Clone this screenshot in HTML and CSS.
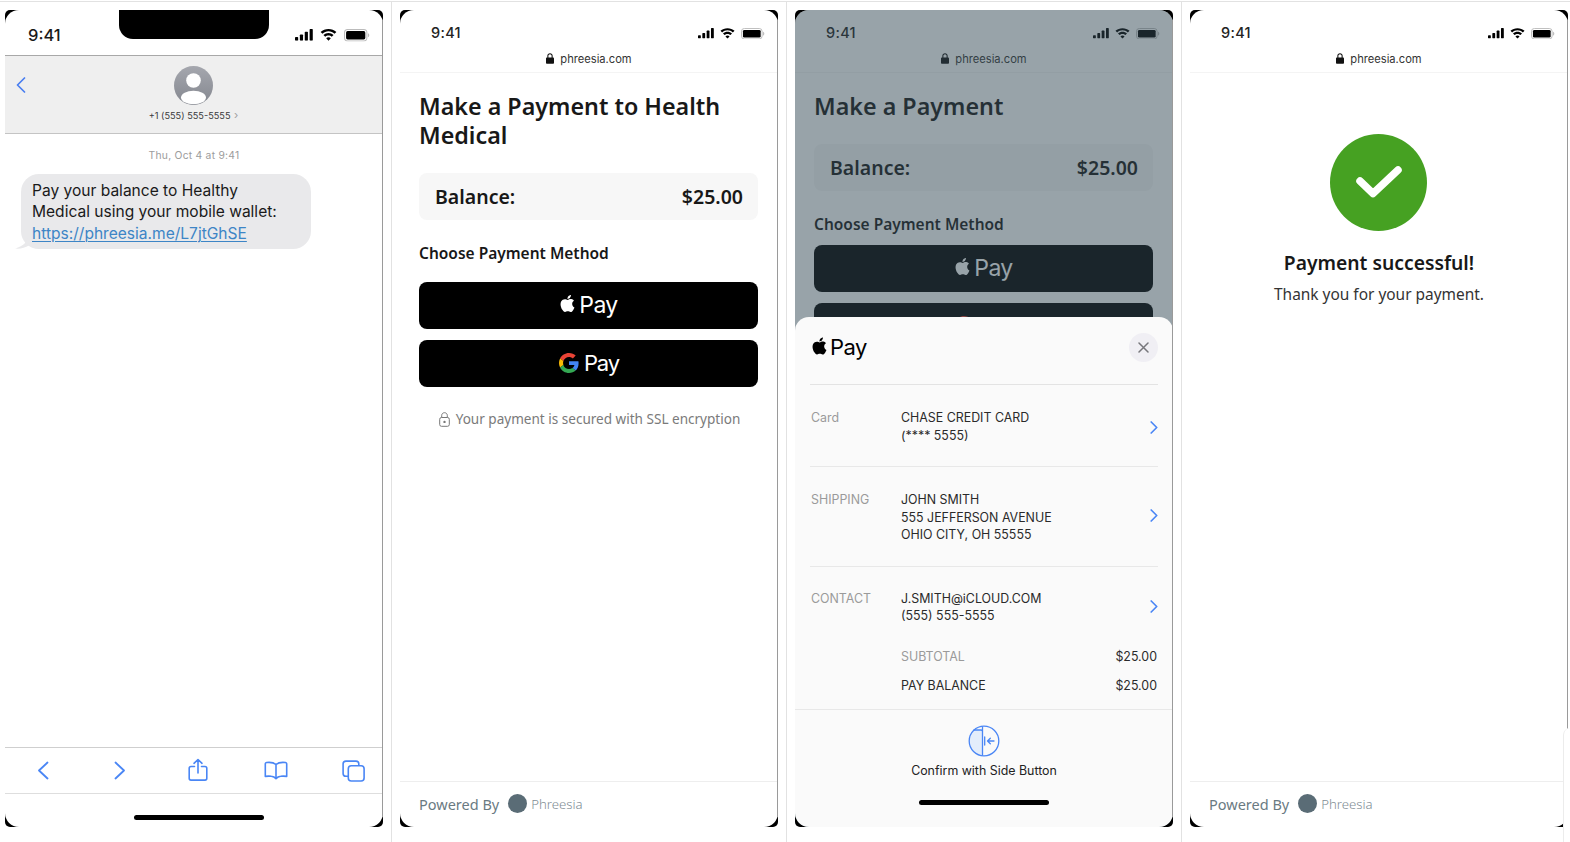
FILE: index.html
```html
<!DOCTYPE html>
<html lang="en">
<head>
<meta charset="utf-8">
<title>Phreesia mobile wallet payment flow</title>
<link rel="stylesheet" href="styles.css">
</head>
<body>
<svg class="defs" aria-hidden="true">
  <symbol id="signal" viewBox="0 0 17 11"><rect x="0" y="7.5" width="3" height="3.5" rx=".7"/><rect x="4.6" y="5.2" width="3" height="5.8" rx=".7"/><rect x="9.2" y="2.6" width="3" height="8.4" rx=".7"/><rect x="13.8" y="0" width="3" height="11" rx=".7"/></symbol>
  <symbol id="wifi" viewBox="0 0 16 11.400"><path d="M8 2.200c2.200 0 4.200.9 5.700 2.300l1.800-1.700C13.500.9 10.900 0 8 0S2.500.9.500 2.800l1.800 1.700C3.800 3.100 5.800 2.200 8 2.200zM8 6.100c1.200 0 2.300.5 3.100 1.200l1.700-1.700C11.500 4.400 9.800 3.700 8 3.700s-3.500.7-4.800 1.900l1.700 1.700C5.700 6.600 6.800 6.100 8 6.100zM8 7.900c-.9 0-1.600.3-2.200.9l2.200 2.300 2.200-2.300c-.6-.6-1.300-.9-2.200-.9z"/></symbol>
  <symbol id="battery" viewBox="0 0 25 12"><rect x=".5" y=".5" width="21.500" height="11" rx="3" fill="none" stroke="#bbb"/><rect x="2" y="2" width="18.500" height="8" rx="1.500"/><path d="M23 4v4c.8-.3 1.300-1.100 1.300-2S23.800 4.300 23 4z" fill="#bbb"/></symbol>
  <symbol id="padlock" viewBox="0 0 9 12"><path d="M4.500 0C2.800 0 1.500 1.300 1.500 3v1.800H1.200C.5 4.800 0 5.300 0 6v4.800c0 .7.5 1.200 1.200 1.200h6.600c.7 0 1.200-.5 1.200-1.200V6c0-.7-.5-1.200-1.200-1.200h-.3V3c0-1.700-1.300-3-3-3zm0 1.200c1 0 1.800.8 1.800 1.800v1.800H2.700V3c0-1 .8-1.800 1.800-1.800z"/></symbol>
  <symbol id="apple" viewBox="0 0 24 24"><path d="M12.152 6.896c-.948 0-2.415-1.078-3.960-1.040-2.040.027-3.910 1.183-4.961 3.014-2.117 3.675-.546 9.103 1.519 12.090 1.013 1.454 2.208 3.090 3.792 3.039 1.520-.065 2.090-.987 3.935-.987 1.831 0 2.350.987 3.960.948 1.637-.026 2.676-1.480 3.676-2.948 1.156-1.688 1.636-3.325 1.662-3.415-.039-.013-3.182-1.221-3.220-4.857-.026-3.040 2.480-4.494 2.597-4.559-1.429-2.090-3.623-2.324-4.390-2.376-2-.156-3.675 1.090-4.610 1.090zM15.530 3.830c.843-1.012 1.400-2.427 1.245-3.830-1.207.052-2.662.805-3.532 1.818-.78.896-1.454 2.338-1.273 3.714 1.338.104 2.715-.688 3.559-1.701"/></symbol>
  <symbol id="google" viewBox="0 0 48 48"><path fill="#EA4335" d="M24 9.500c3.540 0 6.710 1.220 9.210 3.600l6.850-6.850C35.900 2.380 30.470 0 24 0 14.620 0 6.510 5.380 2.560 13.220l7.980 6.190C12.430 13.720 17.740 9.500 24 9.500z"/><path fill="#4285F4" d="M46.980 24.550c0-1.570-.15-3.090-.38-4.550H24v9.020h12.940c-.58 2.960-2.260 5.480-4.780 7.180l7.730 6c4.510-4.180 7.090-10.360 7.090-17.650z"/><path fill="#FBBC05" d="M10.530 28.590c-.48-1.450-.76-2.990-.76-4.590s.27-3.140.76-4.590l-7.980-6.190C.92 16.460 0 20.120 0 24c0 3.880.92 7.540 2.560 10.780l7.970-6.190z"/><path fill="#34A853" d="M24 48c6.480 0 11.930-2.130 15.890-5.810l-7.730-6c-2.150 1.450-4.920 2.300-8.160 2.300-6.260 0-11.570-4.220-13.470-9.910l-7.980 6.190C6.510 42.620 14.620 48 24 48z"/></symbol>
  <symbol id="chev" viewBox="0 0 8 13"><path d="M1.200 1l5.500 5.500-5.500 5.500" fill="none" stroke="#4a86f5" stroke-width="1.700" stroke-linecap="round" stroke-linejoin="round"/></symbol>
</svg>

<main class="board">
  <!-- 1: Messages -->
  <section class="cell cell-first">
    <div class="phone">
      <div class="screen">
        <div class="sms-status">
          <span class="sms-time">9:41</span>
          <div class="notch"></div>
          <div class="status-icons status-icons-lg">
            <svg class="i-signal"><use href="#signal"/></svg>
            <svg class="i-wifi"><use href="#wifi"/></svg>
            <svg class="i-battery"><use href="#battery"/></svg>
          </div>
        </div>
        <header class="sms-head">
          <svg class="sms-back" viewBox="0 0 10 16"><path d="M8.500 1L1.500 8l7 7" fill="none" stroke="#4a7ff0" stroke-width="1.700" stroke-linecap="round" stroke-linejoin="round"/></svg>
          <svg class="avatar" viewBox="0 0 39 39">
            <defs>
              <linearGradient id="avg" x1="0" y1="0" x2="0" y2="1"><stop offset="0" stop-color="#a5a7ae"/><stop offset="1" stop-color="#84878f"/></linearGradient>
              <clipPath id="avc"><circle cx="19.500" cy="19.500" r="19.500"/></clipPath>
            </defs>
            <circle cx="19.500" cy="19.500" r="19.500" fill="url(#avg)"/>
            <circle cx="19.500" cy="14.500" r="7.300" fill="#fff"/>
            <ellipse cx="19.500" cy="31.500" rx="12.500" ry="6.800" fill="#fff" clip-path="url(#avc)"/>
          </svg>
          <div class="sms-name">+1 (555) 555-5555 <span class="sms-name-arrow">›</span></div>
        </header>
        <div class="sms-body">
          <div class="sms-stamp">Thu, Oct 4 at 9:41</div>
          <div class="bubble">
            Pay your balance to Healthy<br>Medical using your mobile wallet:<br>
            <a class="bubble-link">https://phreesia.me/L7jtGhSE</a>
            <svg class="bubble-tail" viewBox="0 0 14 12"><path d="M12 0c0 5-3 9-12 11.500 5 .5 10-.5 14-3z" fill="#e9e9eb"/></svg>
          </div>
        </div>
        <nav class="toolbar">
          <svg class="tool tool-chev" viewBox="0 0 12 19"><path d="M10.500 1.500L2 9.500l8.500 8" fill="none" stroke="#4a86f5" stroke-width="1.800" stroke-linecap="round" stroke-linejoin="round"/></svg>
          <svg class="tool tool-chev" viewBox="0 0 12 19"><path d="M1.500 1.500L10 9.500l-8.500 8" fill="none" stroke="#4a86f5" stroke-width="1.800" stroke-linecap="round" stroke-linejoin="round"/></svg>
          <svg class="tool tool-share" viewBox="0 0 20 24" fill="none" stroke="#4a86f5" stroke-width="1.600" stroke-linecap="round" stroke-linejoin="round"><path d="M6.500 8.500H3c-1 0-1.800.8-1.800 1.800v10c0 1 .8 1.800 1.800 1.800h14c1 0 1.800-.8 1.800-1.800v-10c0-1-.8-1.800-1.800-1.800h-3.500"/><path d="M10 15V1.500M6 5.300l4-3.800 4 3.800"/></svg>
          <svg class="tool tool-book" viewBox="0 0 24 19" fill="none" stroke="#4a86f5" stroke-width="1.600" stroke-linecap="round" stroke-linejoin="round"><path d="M12 3.500C10 1.800 6.500 1 2.500 1.500c-.7.1-1.200.7-1.200 1.400v12.500c2-.3 4-.4 6-.1 2 .2 3.700 1.200 4.700 2.400 1-1.200 2.700-2.200 4.700-2.400 2-.3 4-.2 6 .1V2.900c0-.7-.5-1.300-1.200-1.400C17.500 1 14 1.800 12 3.500zM12 3.500v14"/></svg>
          <svg class="tool tool-tabs" viewBox="0 0 23 22" fill="none" stroke="#4a86f5" stroke-width="1.600" stroke-linejoin="round"><rect x="6.300" y="5.800" width="15.800" height="15.200" rx="3"/><path d="M6.300 16.300H4c-1.600 0-2.900-1.300-2.900-2.900V4C1.100 2.400 2.400 1.100 4 1.100h10c1.600 0 2.800 1.300 2.800 2.900v1.800"/></svg>
        </nav>
        <div class="home-row home-row-sms"><div class="home-bar"></div></div>
      </div>
    </div>
  </section>

  <!-- 2: Choose method -->
  <section class="cell">
    <div class="phone">
      <div class="screen">
        <div class="web-status">
          <span class="web-time">9:41</span>
          <div class="status-icons">
            <svg class="i-signal"><use href="#signal"/></svg>
            <svg class="i-wifi"><use href="#wifi"/></svg>
            <svg class="i-battery"><use href="#battery"/></svg>
          </div>
        </div>
        <div class="urlbar"><svg class="i-lock"><use href="#padlock"/></svg><span>phreesia.com</span></div>
        <div class="page">
          <h1 class="title title-two">Make a Payment to Health Medical</h1>
          <div class="balance"><span>Balance:</span><span>$25.00</span></div>
          <h2 class="choose">Choose Payment Method</h2>
          <button class="pay-btn"><svg class="pay-apple"><use href="#apple"/></svg><span>Pay</span></button>
          <button class="pay-btn pay-btn-g"><svg class="pay-g"><use href="#google"/></svg><span>Pay</span></button>
          <p class="secure">
            <svg class="secure-lock" viewBox="0 0 11 15" fill="none" stroke="#777" stroke-width="1"><rect x=".7" y="5.500" width="9.600" height="8.800" rx="1.800"/><path d="M2.700 5.500V3.400C2.700 1.800 4 .7 5.500.7s2.800 1.100 2.800 2.700v2.100"/><circle cx="5.500" cy="9.900" r="1.200" fill="#777" stroke="none"/></svg>
            Your payment is secured with SSL encryption
          </p>
        </div>
        <footer class="powered"><span>Powered By</span><i class="powered-dot"></i><span class="powered-name">Phreesia</span></footer>
      </div>
    </div>
  </section>

  <!-- 3: Apple Pay sheet -->
  <section class="cell">
    <div class="phone">
      <div class="screen">
        <div class="web-status">
          <span class="web-time">9:41</span>
          <div class="status-icons">
            <svg class="i-signal"><use href="#signal"/></svg>
            <svg class="i-wifi"><use href="#wifi"/></svg>
            <svg class="i-battery"><use href="#battery"/></svg>
          </div>
        </div>
        <div class="urlbar"><svg class="i-lock"><use href="#padlock"/></svg><span>phreesia.com</span></div>
        <div class="page">
          <h1 class="title">Make a Payment</h1>
          <div class="balance"><span>Balance:</span><span>$25.00</span></div>
          <h2 class="choose choose-tight">Choose Payment Method</h2>
          <button class="pay-btn"><svg class="pay-apple"><use href="#apple"/></svg><span>Pay</span></button>
          <button class="pay-btn pay-btn-g"><svg class="pay-g"><use href="#google"/></svg><span>Pay</span></button>
        </div>
        <div class="scrim"></div>
        <div class="sheet">
          <div class="sheet-head">
            <div class="sheet-logo"><svg class="sheet-apple"><use href="#apple"/></svg><span>Pay</span></div>
            <div class="sheet-close"><svg viewBox="0 0 11 11"><path d="M1 1l9 9M10 1l-9 9" stroke="#77777c" stroke-width="1.500" stroke-linecap="round"/></svg></div>
          </div>
          <div class="sheet-row">
            <div class="sheet-label">Card</div>
            <div class="sheet-value">CHASE CREDIT CARD<br>(**** 5555)</div>
            <svg class="sheet-chev"><use href="#chev"/></svg>
          </div>
          <div class="sheet-row">
            <div class="sheet-label">SHIPPING</div>
            <div class="sheet-value">JOHN SMITH<br>555 JEFFERSON AVENUE<br>OHIO CITY, OH 55555</div>
            <svg class="sheet-chev sheet-chev-up2"><use href="#chev"/></svg>
          </div>
          <div class="sheet-row sheet-row-last">
            <div class="sheet-label">CONTACT</div>
            <div class="sheet-value">J.SMITH@iCLOUD.COM<br>(555) 555-5555</div>
            <svg class="sheet-chev sheet-chev-up1"><use href="#chev"/></svg>
          </div>
          <div class="totals">
            <div class="total-line total-sub"><span>SUBTOTAL</span><b>$25.00</b></div>
            <div class="total-line"><span>PAY BALANCE</span><b>$25.00</b></div>
          </div>
          <div class="confirm">
            <svg class="confirm-icon" viewBox="0 0 32 32" fill="none">
              <path d="M14.500 1.700C7.200 2.400 1.500 8.500 1.500 16s5.700 13.600 13 14.300V6.500c0-.9-.6-1.500-1.500-1.500H6z" fill="#e3edfb"/>
              <circle cx="16" cy="16" r="14.800" stroke="#4a86f5" stroke-width="1.300"/>
              <path d="M14.500 2v28M6 5h7c.9 0 1.500.6 1.500 1.500M16.700 12v8M26 16h-6.500M22.300 13.200L19.500 16l2.800 2.800" stroke="#4a86f5" stroke-width="1.300" stroke-linecap="round" stroke-linejoin="round"/>
            </svg>
            <div class="confirm-text">Confirm with Side Button</div>
          </div>
          <div class="home-row home-row-sheet"><div class="home-bar"></div></div>
        </div>
      </div>
    </div>
  </section>

  <!-- 4: Success -->
  <section class="cell cell-last">
    <div class="phone">
      <div class="screen">
        <div class="web-status">
          <span class="web-time">9:41</span>
          <div class="status-icons">
            <svg class="i-signal"><use href="#signal"/></svg>
            <svg class="i-wifi"><use href="#wifi"/></svg>
            <svg class="i-battery"><use href="#battery"/></svg>
          </div>
        </div>
        <div class="urlbar"><svg class="i-lock"><use href="#padlock"/></svg><span>phreesia.com</span></div>
        <div class="page success">
          <svg class="success-icon" viewBox="0 0 97 97"><circle cx="48.500" cy="48.500" r="48.500" fill="#46a122"/><path d="M30 47l13 12.500L68 36" fill="none" stroke="#fff" stroke-width="7.500" stroke-linecap="round" stroke-linejoin="round"/></svg>
          <h1 class="success-title">Payment successful!</h1>
          <p class="success-text">Thank you for your payment.</p>
        </div>
        <footer class="powered"><span>Powered By</span><i class="powered-dot"></i><span class="powered-name">Phreesia</span></footer>
      </div>
    </div>
    <div class="edge-patch"></div>
  </section>
</main>
</body>
</html>
```

FILE: styles.css
```css
* { box-sizing: border-box; }
html, body { margin: 0; padding: 0; background: #fff; }
body { width: 1570px; height: 842px; overflow: hidden; padding-top: 1px; font-family: "Inter", "Liberation Sans", sans-serif; color: #1c1c1e; }
.defs { position: absolute; width: 0; height: 0; }
svg { display: block; }

.board { display: grid; grid-template-columns: 391px 395px 395px 389px; height: 841px; border-top: 1px solid #e2e2e2; }
.cell { position: relative; border-left: 1px solid #e2e2e2; padding: 8px 0 0 8px; }
.cell-first { border-left: 0; padding-left: 5px; }

.phone { width: 378px; height: 817px; background: #000; border-radius: 5px; display: flex; position: relative; }
.phone::after { content: ""; position: absolute; top: 10px; bottom: 10px; right: 0; width: 1px; background: #9a9a9a; }
.screen { flex: 1; min-width: 0; background: #fff; border-radius: 14px; overflow: hidden; display: flex; flex-direction: column; position: relative; }

/* status */
.status-icons { display: flex; align-items: center; gap: 6px; }
.i-signal { width: 16px; height: 10.500px; fill: #000; }
.i-wifi { width: 15px; height: 11px; fill: #000; }
.i-battery { width: 24px; height: 11.500px; fill: #000; }
.status-icons-lg { gap: 7px; }
.status-icons-lg .i-signal { width: 18px; height: 11.700px; }
.status-icons-lg .i-wifi { width: 17px; height: 12px; }
.status-icons-lg .i-battery { width: 26px; height: 12.500px; }

/* messages */
.sms-status { height: 46px; flex: none; display: flex; align-items: flex-start; padding: 0 13px 0 23px; border-bottom: 1px solid #a8a8a8; position: relative; }
.sms-time { font-size: 16.500px; font-weight: 500; line-height: 20px; margin-top: 15px; color: #1a1a1a; }
.sms-status .status-icons { margin-left: auto; margin-top: 19px; }
.notch { position: absolute; left: 114px; top: 0; width: 150px; height: 29px; background: #000; border-radius: 0 0 14px 14px; }
.sms-head { height: 78px; flex: none; background: #efefef; border-bottom: 1px solid #c4c4c4; display: flex; flex-direction: column; align-items: center; padding: 10px 1px 0 0; position: relative; }
.sms-back { position: absolute; left: 11px; top: 21px; width: 10px; height: 16px; }
.avatar { width: 39px; height: 39px; flex: none; }
.sms-name { font-size: 9.200px; line-height: 12px; margin-top: 4px; color: #3a3a3c; }
.sms-name-arrow { color: #a0a0a0; font-size: 11px; margin-left: 1px; }
.sms-body { flex: 1; padding: 0 16px; }
.sms-stamp { font-size: 10.300px; line-height: 14px; color: #9c9c9c; text-align: center; margin-top: 14px; letter-spacing: .25px; }
.bubble { width: 290px; height: 75px; margin-top: 12px; padding: 6px 11px; background: #e9e9eb; border-radius: 18px; font-size: 15.550px; line-height: 21.300px; color: #1a1a1a; position: relative; }
.bubble-link { color: #3d85c6; text-decoration: underline; text-underline-offset: 2px; text-decoration-thickness: 1px; }
.bubble-tail { position: absolute; left: -6px; bottom: 0; width: 14px; height: 12px; }
.toolbar { height: 47px; flex: none; border-top: 1px solid #cfcfcf; border-bottom: 1px solid #dedede; display: flex; align-items: center; padding-left: 32px; }
.tool { flex: none; }
.tool-chev { width: 12px; height: 19px; }
.tool-chev + .tool-chev { margin-left: 65px; }
.tool-share { width: 20px; height: 24px; margin-left: 62px; margin-top: -2px; }
.tool-book { width: 24px; height: 19px; margin-left: 56px; }
.tool-tabs { width: 23px; height: 22px; margin-left: 54px; }
.home-row { flex: none; height: 33px; display: flex; justify-content: center; padding-top: 21px; }
.home-row-sms { padding-left: 9px; }
.home-bar { width: 130px; height: 5px; background: #000; border-radius: 3px; }

/* web */
.web-status { flex: none; height: 37px; display: flex; align-items: flex-end; padding: 0 13px 0 31px; justify-content: space-between; }
.web-time { font-size: 14.500px; font-weight: 500; line-height: 18px; margin-bottom: 5px; color: #222; letter-spacing: .3px; }
.web-status .status-icons { margin-bottom: 8px; }
.urlbar { flex: none; height: 26px; display: flex; align-items: center; justify-content: center; gap: 6px; border-bottom: 1px solid #f4f4f4; font-size: 11.150px; color: #333; padding-bottom: 2px; }
.i-lock { width: 8px; height: 11px; fill: #111; }
.page { flex: 1; min-height: 0; padding: 19px 20px 0 19px; font-family: "Noto Sans", "Open Sans", sans-serif; display: flex; flex-direction: column; }
.title { margin: 0; font-size: 23.300px; line-height: 29px; font-weight: 600; color: #181818; }
.title-two { width: 320px; }
.balance { flex: none; height: 47px; margin-top: 23px; padding: 0 15px 0 16px; border-radius: 8px; background: #f7f7f7; display: flex; align-items: center; justify-content: space-between; font-size: 19.500px; font-weight: 600; color: #181818; }
.choose { margin: 21px 0 17px; font-size: 15.500px; line-height: 24px; font-weight: 600; color: #181818; }
.choose-tight { margin-bottom: 9px; }
.pay-btn { flex: none; width: 100%; height: 47px; border: 0; border-radius: 8px; background: #000; margin: 0 0 11px; display: flex; align-items: center; justify-content: center; color: #fff; font-family: "Inter", "Liberation Sans", sans-serif; font-size: 23px; line-height: 28px; letter-spacing: -.6px; padding: 0 0 2px; }
.pay-btn-g { font-size: 22px; letter-spacing: -1.100px; padding-left: 1px; }
.pay-apple { width: 17px; height: 19px; fill: #fff; margin-right: 3px; margin-top: -3px; }
.pay-g { width: 20px; height: 20px; margin-right: 5px; margin-top: 1px; }
.secure { margin: 11px 0 0; padding-left: 2px; display: flex; align-items: center; justify-content: center; gap: 6px; font-size: 13.550px; line-height: 20px; color: #7a7a7a; }
.secure-lock { width: 11px; height: 15px; }
.powered { flex: none; height: 46px; border-top: 1px solid #eeeeee; display: flex; align-items: center; padding: 0 19px 2px; font-family: "Noto Sans", "Open Sans", sans-serif; font-size: 14.500px; color: #6a7a82; }
.powered-dot { width: 19px; height: 19px; border-radius: 50%; background: #5a6c76; margin: 0 4px 0 9px; }
.powered-name { font-size: 13.200px; color: #7f8d95; font-weight: 300; }

/* overlay */
.scrim { position: absolute; inset: 0; background: rgba(51, 73, 85, .505); }
.sheet { position: absolute; left: 0; right: 0; top: 307px; bottom: 0; background: #fafafa; border-radius: 14px; display: flex; flex-direction: column; }
.sheet-head { flex: none; height: 68px; margin: 0 15px; border-bottom: 1px solid #e3e3e3; display: flex; align-items: center; justify-content: space-between; }
.sheet-logo { display: flex; align-items: center; font-size: 22px; line-height: 28px; letter-spacing: -.6px; color: #000; padding-left: 1px; margin-top: -7px; }
.sheet-apple { width: 17px; height: 20px; fill: #000; margin-right: 2px; margin-top: -3px; }
.sheet-close { width: 29px; height: 29px; border-radius: 50%; background: #f0eff4; display: flex; align-items: center; justify-content: center; margin-top: -6px; }
.sheet-close svg { width: 11px; height: 11px; }
.sheet-row { flex: none; margin: 0 15px; padding: 24px 0 22px; border-bottom: 1px solid #e8e8e8; display: flex; align-items: center; font-size: 12.400px; line-height: 17.500px; }
.sheet-row-last { border-bottom: 0; padding: 23px 0 0; }
.sheet-label { flex: none; width: 90px; margin-left: 1px; align-self: flex-start; color: #9a9a9a; }
.sheet-value { flex: 1; color: #2a2a2a; }
.sheet-chev { flex: none; width: 8px; height: 13px; margin-top: 2px; }
.sheet-chev-up2 { margin: 0 0 4px; }
.sheet-chev-up1 { margin: 0 0 2px; }
.totals { flex: none; margin: 23px 16px 0 106px; font-size: 12.400px; line-height: 17.500px; }
.total-line { display: flex; justify-content: space-between; color: #2a2a2a; margin-bottom: 11.500px; }
.total-line b { font-weight: 400; }
.total-sub span { color: #9a9a9a; }
.confirm { flex: none; border-top: 1px solid #e8e8e8; padding-top: 15px; margin-top: 3px; display: flex; flex-direction: column; align-items: center; }
.confirm-icon { width: 32px; height: 32px; }
.confirm-text { font-size: 12.400px; line-height: 16px; margin-top: 6px; color: #222; }
.home-row-sheet { padding-top: 21px; height: auto; }

/* success */
.success { align-items: center; padding: 61px 0 0; }
.success-icon { width: 97px; height: 97px; flex: none; margin-left: -2px; }
.success-title { margin: 18px 0 0; font-size: 19.300px; line-height: 27px; font-weight: 600; color: #181818; }
.success-text { margin: 7px 0 0; font-size: 15.450px; line-height: 22px; color: #333; }
.edge-patch { position: absolute; right: 0; top: 726px; bottom: 0; width: 7px; background: #fff; border-left: 1px solid #ececec; border-top-left-radius: 8px; }
```
